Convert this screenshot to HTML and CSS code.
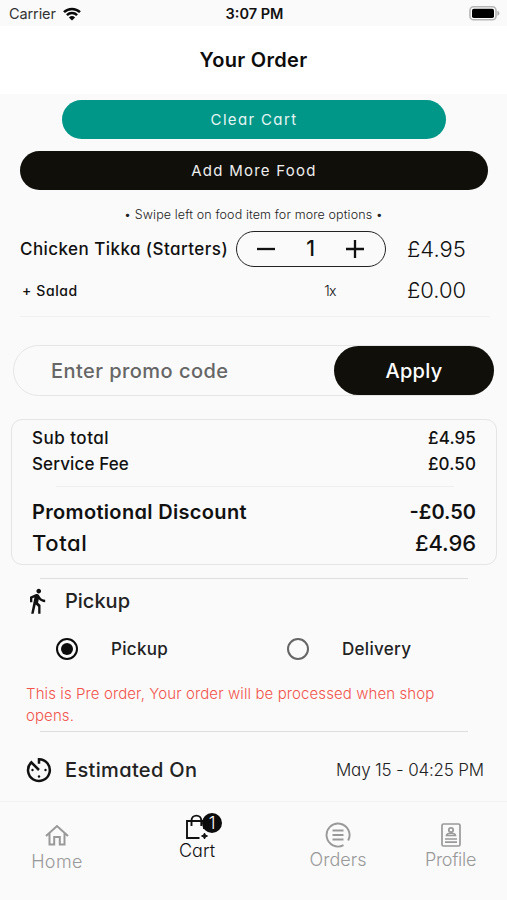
FILE: index.html
```
<!DOCTYPE html>
<html lang="en">
<head>
<meta charset="utf-8">
<title>Your Order</title>
<link rel="stylesheet" href="styles.css">
</head>
<body>
<div class="status">
  <div class="carrier">Carrier
    <svg width="18" height="14" viewBox="0 0 18 14" fill="none" stroke="#0a0a0a" stroke-width="2.5"><path d="M1 5.2a11.4 11.4 0 0 1 16 0M3.9 8.1a7.3 7.3 0 0 1 10.2 0"/><path d="M9 13.6 5.9 10.5a4.5 4.5 0 0 1 6.2 0z" fill="#0a0a0a" stroke="none"/></svg>
  </div>
  <div class="time">3:07 PM</div>
  <svg class="battery" width="31" height="15" viewBox="0 0 31 15"><rect x="1" y=".8" width="26" height="13" rx="3.6" fill="#fff" stroke="#b5b5b5" stroke-width="1.6"/><rect x="3" y="2.7" width="22" height="9.3" rx="1.8" fill="#000"/><path d="M28.4 4.8c2.6.9 2.6 4.1 0 5z" fill="#b0b0b0"/></svg>
</div>
<header class="header"><h1>Your Order</h1></header>
<main>
  <button class="btn clear">Clear Cart</button>
  <button class="btn add">Add More Food</button>
  <p class="hint">• Swipe left on food item for more options •</p>
  <section class="items">
    <div class="item">
      <span class="name">Chicken Tikka (Starters)</span>
      <div class="stepper">
        <svg width="20" height="20" viewBox="0 0 20 20" stroke="#111" stroke-width="2.3"><path d="M1 10h18"/></svg>
        <span class="one">1</span>
        <svg width="20" height="20" viewBox="0 0 20 20" stroke="#111" stroke-width="2.3"><path d="M1 10h18M10 1v18"/></svg>
      </div>
      <span class="price">£4.95</span>
    </div>
    <div class="item extra">
      <span class="name">+ Salad</span><span class="qty">1x</span><span class="price">£0.00</span>
    </div>
  </section>
  <section class="promo"><span class="placeholder">Enter promo code</span><button class="apply">Apply</button></section>
  <section class="summary">
    <div class="row"><span class="sub">Sub total</span><span>£4.95</span></div>
    <div class="row"><span>Service Fee</span><span>£0.50</span></div>
    <hr>
    <div class="row discount"><span>Promotional Discount</span><span>-£0.50</span></div>
    <div class="row total"><span>Total</span><span>£4.96</span></div>
  </section>
  <section class="delivery">
    <div class="line pickup">
      <svg width="28" height="28" viewBox="0 0 24 24" fill="#111"><path d="M13.500 5.500c1.100 0 2-.9 2-2s-.9-2-2-2-2 .9-2 2 .9 2 2 2zM9.800 8.900 7 23h2.100l1.800-8 2.100 2v6h2v-7.500l-2.100-2 .6-3C14.800 12 16.800 13 19 13v-2c-1.900 0-3.500-1-4.300-2.400l-1-1.600c-.4-.6-1-1-1.700-1-.3 0-.5.1-.8.1L6 8.300V13h2V9.600l1.800-.7"/></svg>
      <span>Pickup</span>
    </div>
    <div class="options">
      <label><i class="radio on"></i><span>Pickup</span></label>
      <label><i class="radio"></i><span>Delivery</span></label>
    </div>
    <p class="notice">This is Pre order, Your order will be processed when shop opens.</p>
  </section>
  <section class="eta">
    <svg width="26" height="26" viewBox="0 0 26 26" fill="none" stroke="#111" stroke-width="2.5"><path d="M13 6.800V2.200A10.900 10.900 0 1 1 5.300 5.300L13 13"/><g fill="#111" stroke="none"><circle cx="6.500" cy="13" r="1.200"/><circle cx="19.500" cy="13" r="1.200"/><circle cx="13" cy="19.500" r="1.200"/></g></svg>
    <span class="label">Estimated On</span><span class="date">May 15 - 04:25 PM</span>
  </section>
</main>
<nav class="tabs">
  <a class="tab home"><svg width="24" height="22" viewBox="0 0 24 22" fill="none" stroke="#999" stroke-width="2"><path d="M1 12 12 2l11 10M4.500 9.500V20.500h4.700v-7.500h5.600v7.500h4.700V9.500"/></svg><span>Home</span></a>
  <a class="tab cart"><span class="icon"><svg width="24" height="26" viewBox="0 0 24 26" fill="none" stroke="#111" stroke-width="1.900"><path d="M14.500 24H2V7h17v8M6.500 12V6.500a4.900 4.900 0 0 1 9.800 0V12"/><path d="m19.500 19 .9 2.100 2.100.9-2.100.9-.9 2.100-.9-2.100-2.100-.9 2.100-.9z" fill="#111" stroke-width="1"/></svg><b class="badge">1</b></span><span>Cart</span></a>
  <a class="tab orders"><svg width="26" height="26" viewBox="0 0 26 26" fill="none" stroke="#999" stroke-width="1.900"><path d="M18.500 23.200A11.500 11.500 0 1 1 23.200 18.500M7.500 8.500h11M7.500 13h11M7.500 17.500h11"/></svg><span>Orders</span></a>
  <a class="tab profile"><svg width="20" height="24" viewBox="0 0 20 24" fill="none" stroke="#999" stroke-width="1.700"><rect x="1" y="1" width="18" height="22" rx="1.500"/><circle cx="10" cy="7" r="2.200"/><path d="M5.500 12.500c.3-3 8.700-3 9 0zM4 16h12M4 19.200h12"/></svg><span>Profile</span></a>
</nav>
</body>
</html>
```
FILE: styles.css
```
* { box-sizing: border-box; }
body {
  margin: 0;
  width: 507px;
  height: 900px;
  overflow: hidden;
  display: flex;
  flex-direction: column;
  background: #fafafa;
  color: #111;
  font-family: Inter, "Open Sans", sans-serif;
  font-feature-settings: "cv11" 1;
}
h1, p { margin: 0; }
button { border: 0; padding: 0; font: inherit; font-feature-settings: inherit; color: #fff; }
svg { display: block; flex: none; }

.status {
  flex: none;
  height: 26px;
  display: grid;
  grid-template-columns: 1fr auto 1fr;
  align-items: center;
  padding: 1px 7px 0 9px;
  font-size: 14.5px;
  font-feature-settings: normal;
}
.carrier { display: flex; gap: 7px; align-items: center; letter-spacing: -.1px; color: #333; }
.time { font-weight: 600; color: #111; }
.battery { justify-self: end; }

.header { flex: none; height: 68px; background: #fff; display: flex; align-items: center; justify-content: center; }
.header h1 { font-size: 20px; font-weight: 600; letter-spacing: .3px; color: #0c0c0c; }

main { flex: 1; display: flex; flex-direction: column; }
.btn { flex: none; height: 39px; border-radius: 20px; font-size: 15px; }
.clear { margin: 6px 61px 0 62px; background: #009788; letter-spacing: 1.35px; color: #e6f5f3; }
.add { margin: 12px 19px 0 20px; background: #100f0a; letter-spacing: 1.25px; color: #eee; }
.hint { margin-top: 15px; line-height: 20px; text-align: center; font-size: 12.5px; font-weight: 300; letter-spacing: .12px; color: #222; }

.items { margin: 6px 17px 0 20px; height: 86px; border-bottom: 1px solid #f1f1f1; }
.item { display: grid; grid-template-columns: 216px 150px 1fr; height: 36px; align-items: center; }
.item .name { font-size: 17px; font-weight: 500; letter-spacing: .44px; white-space: nowrap; }
.stepper { height: 36px; border: 1.5px solid #222; border-radius: 18px; display: flex; align-items: center; justify-content: space-between; padding: 0 20px 0 19px; }
.one { font-size: 21px; font-weight: 500; line-height: 30px; }
.price { padding-left: 21px; font-size: 22px; font-weight: 300; }
.item.extra { margin-top: 5px; }
.extra .name { font-size: 14px; letter-spacing: .6px; padding-left: 2px; }
.qty { font-size: 14px; font-weight: 300; text-align: center; padding-left: 38px; letter-spacing: -.8px; }

.promo { margin: 28px 13px 0; height: 51px; border: 1px solid #e6e6e6; border-radius: 26px; display: flex; align-items: center; justify-content: space-between; padding-left: 37px; }
.placeholder { font-size: 20px; font-weight: 500; letter-spacing: .45px; color: #666; }
.apply { width: 160px; height: 49px; margin-right: -1px; border-radius: 25px; background: #100f0a; font-size: 20px; font-weight: 500; letter-spacing: .25px; }

.summary { margin: 23px 10px 0 11px; height: 146px; border: 1px solid #e5e5e5; border-radius: 11px; padding: 5px 20px 0; }
.row { display: flex; justify-content: space-between; height: 26px; align-items: center; font-size: 17px; font-weight: 500; letter-spacing: .12px; }
.row .sub { letter-spacing: .5px; }
.summary hr { margin: 9px 22px 10px 24px; border: 0; height: 1px; background: #efefef; }
.discount { height: 30px; font-size: 20px; font-weight: 600; letter-spacing: .33px; }
.discount span + span { letter-spacing: 0; }
.total { height: 32px; font-size: 22px; letter-spacing: .6px; }
.total span + span { letter-spacing: -.1px; }

.delivery { margin: 13px 39px 0 40px; height: 154px; border: solid #dedede; border-width: 1.5px 0; }
.line { margin-left: -17px; height: 44px; display: flex; align-items: center; gap: 14px; font-size: 20px; font-weight: 500; color: #222; }
.options { display: flex; height: 51px; align-items: center; padding-left: 16px; font-size: 17px; font-weight: 500; color: #222; }
.options label { flex: 0 0 231px; display: flex; align-items: center; gap: 33px; letter-spacing: .3px; white-space: nowrap; }
.radio { width: 22px; height: 22px; flex: none; border: 2.5px solid #666; border-radius: 50%; padding: 3px; }
.radio.on { border-color: #0c0c0c; background: #0c0c0c content-box; }
.notice { margin: 9px 0 0 -14px; line-height: 22px; font-size: 15px; font-weight: 300; letter-spacing: .1px; color: #f2544b; }

.eta { height: 69px; padding: 7px 23px 0 26px; display: flex; align-items: center; }
.eta .label { margin-left: 13px; font-size: 20px; font-weight: 500; letter-spacing: .35px; color: #222; }
.eta .date { margin-left: auto; font-size: 17px; font-weight: 300; letter-spacing: -.18px; color: #222; }

.tabs { flex: none; height: 100px; border-top: 1px solid #f2f2f2; display: grid; grid-template-columns: 114px 166px 116px 1fr; font-size: 18px; font-weight: 300; color: #999; }
.tab { display: flex; flex-direction: column; align-items: center; line-height: 22px; }
.home { padding-top: 22px; gap: 5px; letter-spacing: .4px; }
.cart { padding-top: 12px; color: #111; }
.cart .icon { position: relative; display: block; height: 26px; }
.badge { position: absolute; left: 17px; top: -1px; width: 20px; height: 20px; border-radius: 50%; background: #0c0c0c; color: #fff; font-size: 17px; font-weight: 300; line-height: 20px; text-align: center; }
.orders { padding-top: 20px; gap: 1px; }
.profile { padding: 21px 2px 0 0; gap: 2px; letter-spacing: -.3px; }
```
